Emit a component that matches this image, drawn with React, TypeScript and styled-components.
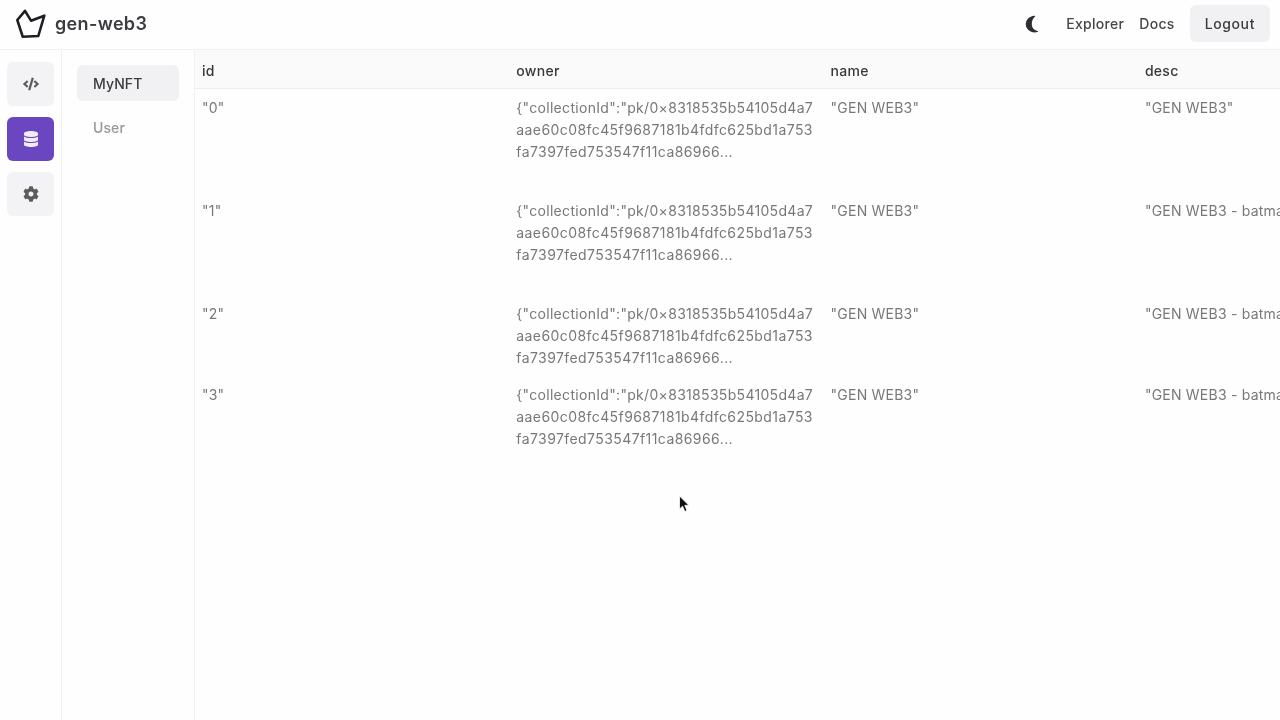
import React from 'react';
import styled, { createGlobalStyle } from 'styled-components';
import { FaCode, FaCog, FaDatabase } from 'react-icons/fa';

const GlobalStyle = createGlobalStyle`
  html, body {
    margin: 0;
    padding: 0;
    background: #fff;
    font-family: Inter, "Liberation Sans", sans-serif;
  }
`;

const Page = styled.div`
  position: relative;
  width: 1280px;
  height: 720px;
  overflow: hidden;
  display: flex;
  flex-direction: column;
  background: #fefefe;
  filter: blur(0.5px);
`;

const Header = styled.header`
  flex: none;
  display: flex;
  align-items: center;
  justify-content: space-between;
  padding: 0 10px 2px 14px;
  height: 47px;
  border-bottom: 1px solid #f1f1f2;
`;

const Brand = styled.div`
  display: flex;
  align-items: center;
  gap: 9px;
  font-size: 18px;
  font-weight: 600;
  letter-spacing: 0.35px;
  color: #3c3c40;
`;

const HeaderActions = styled.nav`
  display: flex;
  align-items: center;
  font-size: 14px;
  font-weight: 500;
  letter-spacing: 0.3px;
  color: #46464a;
`;

const MoonButton = styled.svg`
  display: block;
  margin-right: 27px;
`;

const NavLink = styled.span`
  margin-right: 15px;
`;

const LogoutButton = styled.span`
  display: flex;
  align-items: center;
  height: 37px;
  padding: 0 15px;
  border-radius: 6px;
  letter-spacing: 0.6px;
  background: #f1f1f3;
  color: #3c3c40;
`;

const Body = styled.div`
  flex: 1;
  display: flex;
  min-height: 0;
`;

const IconRail = styled.aside`
  width: 62px;
  flex: none;
  display: flex;
  flex-direction: column;
  gap: 11px;
  padding: 12px 0 0 7px;
  box-sizing: border-box;
  border-right: 1px solid #f1f1f2;
`;

const RailButton = styled.div<{ $active?: boolean }>`
  width: 47px;
  height: 44px;
  display: flex;
  align-items: center;
  justify-content: center;
  border-radius: 6px;
  font-size: 16px;
  background: ${p => (p.$active ? '#6b46c1' : '#f3f3f5')};
  color: ${p => (p.$active ? '#f1ecfa' : '#5c5c60')};
`;

const TableList = styled.aside`
  width: 133px;
  flex: none;
  display: flex;
  flex-direction: column;
  gap: 8px;
  padding: 15px 15px 0 15px;
  box-sizing: border-box;
  border-right: 1px solid #f1f1f2;
`;

const TableItem = styled.div<{ $active?: boolean }>`
  height: 36px;
  display: flex;
  align-items: center;
  padding: 0 16px;
  border-radius: 6px;
  font-size: 14px;
  font-weight: 500;
  letter-spacing: 0.1px;
  background: ${p => (p.$active ? '#f1f1f3' : 'transparent')};
  color: ${p => (p.$active ? '#3c3c40' : '#97979c')};
`;

const TableArea = styled.main`
  flex: 1;
  min-width: 0;
  overflow: hidden;
`;

const Grid = styled.div<{ $height: number; $head?: boolean }>`
  display: grid;
  grid-template-columns: repeat(4, 314.3px);
  width: 1258px;
  height: ${p => p.$height}px;
  box-sizing: border-box;
  background: ${p => (p.$head ? '#fafafa' : 'transparent')};
  border-bottom: ${p => (p.$head ? '1px solid #eeeeef' : 'none')};
`;

const HeadCell = styled.div`
  padding: 0 7px;
  line-height: 41px;
  font-size: 14px;
  font-weight: 500;
  letter-spacing: 0.3px;
  color: #38383c;
`;

const Cell = styled.div`
  padding: 8px 7px;
  font-size: 14px;
  line-height: 22px;
  letter-spacing: 0.22px;
  color: #78787c;
  white-space: nowrap;
  overflow: hidden;
`;

const OwnerLine = styled.div`
  white-space: nowrap;
  letter-spacing: 0.42px;

  &:first-child {
    letter-spacing: 0.31px;
  }
`;

const Cursor = styled.svg`
  position: absolute;
  left: 678px;
  top: 495px;
`;

type Row = { id: string; desc: string; height: number };

const rows: Row[] = [
  { id: '"0"', desc: '"GEN WEB3"', height: 103 },
  { id: '"1"', desc: '"GEN WEB3 - batman"', height: 103 },
  { id: '"2"', desc: '"GEN WEB3 - batman"', height: 81 },
  { id: '"3"', desc: '"GEN WEB3 - batman"', height: 81 },
];

const ownerLines = [
  '{"collectionId":"pk/0×8318535b54105d4a7',
  'aae60c08fc45f9687181b4fdfc625bd1a753',
  'fa7397fed753547f11ca86966...',
];

const Logo = () => (
  <svg width="32" height="30" viewBox="0 0 32 30" fill="none" stroke="#1e1e22" strokeWidth="2.6" strokeLinejoin="round">
    <path d="M3.3 11 L11 1.8 L17 11.7 L30.3 6.7 L24.3 27 L8.7 27.7 Z" />
  </svg>
);

const App = () => {
  return (
    <>
      <GlobalStyle />
      <Page>
        <Header>
          <Brand>
            <Logo />
            gen-web3
          </Brand>
          <HeaderActions>
            <MoonButton width="14" height="18" viewBox="0 0 14 18">
              <path d="M9.5 0.8 C4 1.2 0.8 5 0.8 9.3 C0.8 13.8 5 17.4 9.5 17.4 C11 17.4 12.5 17 13.5 16.2 C9 15.5 6.8 12.5 6.8 9 C6.8 5.8 8 3 10.5 1 Z" fill="#2e2e32" />
            </MoonButton>
            <NavLink>Explorer</NavLink>
            <NavLink>Docs</NavLink>
            <LogoutButton>Logout</LogoutButton>
          </HeaderActions>
        </Header>
        <Body>
          <IconRail>
            <RailButton><FaCode /></RailButton>
            <RailButton $active><FaDatabase /></RailButton>
            <RailButton><FaCog /></RailButton>
          </IconRail>
          <TableList>
            <TableItem $active>MyNFT</TableItem>
            <TableItem>User</TableItem>
          </TableList>
          <TableArea>
            <Grid $head $height={39}>
              <HeadCell>id</HeadCell>
              <HeadCell>owner</HeadCell>
              <HeadCell>name</HeadCell>
              <HeadCell>desc</HeadCell>
            </Grid>
            {rows.map(row => (
              <Grid key={row.id} $height={row.height}>
                <Cell>{row.id}</Cell>
                <Cell>
                  {ownerLines.map(line => <OwnerLine key={line}>{line}</OwnerLine>)}
                </Cell>
                <Cell>"GEN WEB3"</Cell>
                <Cell>{row.desc}</Cell>
              </Grid>
            ))}
          </TableArea>
        </Body>
        <Cursor width="12" height="18" viewBox="0 0 12 18">
          <path d="M1.5 1 L1.5 14 L4.6 11.2 L6.8 16.5 L9 15.5 L6.8 10.4 L10.8 10.2 Z" fill="#111" stroke="#fff" strokeWidth="0.8" />
        </Cursor>
      </Page>
    </>
  );
};

export default App;
